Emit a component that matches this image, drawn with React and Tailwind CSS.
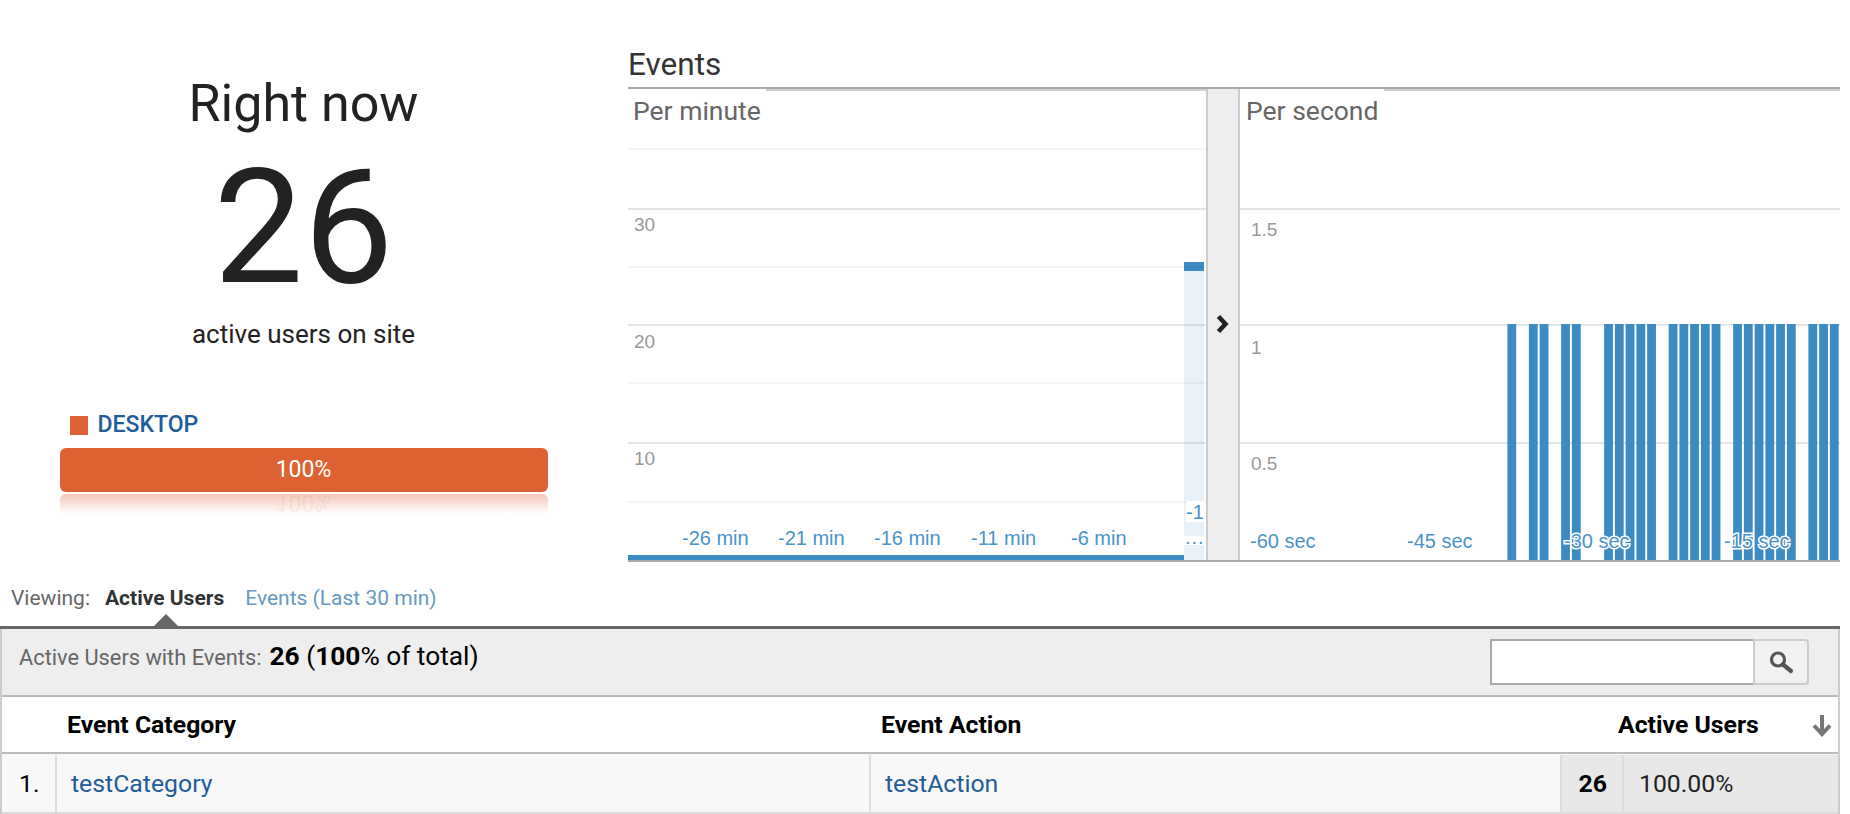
const MINUTE_GRID = [
  { y: 149, soft: true },
  { y: 209 },
  { y: 267, soft: true },
  { y: 325 },
  { y: 383, soft: true },
  { y: 443 },
  { y: 502, soft: true },
];
const MINUTE_TICKS = [
  ['-26 min', 682],
  ['-21 min', 778],
  ['-16 min', 874],
  ['-11 min', 971],
  ['-6 min', 1071],
];
const SECOND_TICKS = [
  ['-60 sec', 1250],
  ['-45 sec', 1407],
  ['-30 sec', 1564],
  ['-15 sec', 1724],
];
// slots counted back from the newest bar
const SECOND_SLOTS = [0, 1, 2, 4, 5, 6, 7, 8, 9, 11, 12, 13, 14, 15, 17, 18, 19, 20, 21, 24, 25, 27, 28, 30];

const axisFont = { fontFamily: '"Liberation Sans", Arial, sans-serif' };

const MinuteChart = () => (
  <svg viewBox="628 90 578 471" className="block w-[578px] h-[471px]" style={axisFont}>
    <rect x="766" y="90" width="440" height="2" fill="#cfcfcf" />
    <rect x="1184" y="263" width="20" height="298" fill="#e9f1f8" />
    <rect x="1184" y="263" width="20" height="9" fill="#3c8bc3" />
    {MINUTE_GRID.map((g) => (
      <rect key={g.y} x="628" y={g.y} width="578" height="2" fill="#000" fillOpacity={g.soft ? 0.04 : 0.1} />
    ))}
    <rect x="628" y="556" width="556" height="5" fill="#3c8bc3" />
    <text x="634" y="232" fontSize="19" fill="#999">30</text>
    <text x="634" y="349" fontSize="19" fill="#999">20</text>
    <text x="634" y="466" fontSize="19" fill="#999">10</text>
    {MINUTE_TICKS.map(([label, x]) => (
      <text key={label} x={x} y="546" fontSize="20" fill="#4a93c8">{label}</text>
    ))}
    <rect x="1186" y="502" width="18" height="21" fill="#fff" />
    <text x="1186" y="520" fontSize="20" fill="#4a93c8">-1</text>
    <rect x="1184" y="537" width="20" height="9" fill="#fff" />
    <text x="1185" y="545" fontSize="20" fill="#4a93c8" letterSpacing="1">...</text>
  </svg>
);

const SecondChart = () => (
  <svg viewBox="1240 90 600 471" className="block w-[600px] h-[471px]" style={axisFont}>
    <rect x="1384" y="90" width="456" height="2" fill="#cfcfcf" />
    <rect x="1240" y="209" width="600" height="2" fill="#e5e5e5" />
    <rect x="1240" y="325" width="600" height="2" fill="#e5e5e5" />
    <rect x="1240" y="443" width="600" height="2" fill="#e5e5e5" />
    {SECOND_SLOTS.map((k) => (
      <rect key={k} x={1829.9 - 10.75 * k} y="325" width="8.8" height="236" fill="#3c8bc3" />
    ))}
    <text x="1251" y="237" fontSize="19" fill="#999">1.5</text>
    <text x="1251" y="355" fontSize="19" fill="#999">1</text>
    <text x="1251" y="471" fontSize="19" fill="#999">0.5</text>
    {SECOND_TICKS.map(([label, x]) => (
      <text key={label} x={x} y="549" fontSize="20" fill="#4a93c8" stroke="#fff" strokeWidth="3" style={{ paintOrder: 'stroke' }}>
        {label}
      </text>
    ))}
  </svg>
);

const App = () => {
  return (
    <div className="w-full h-[814px] overflow-hidden bg-white font-['Roboto',sans-serif] text-[#222]">
      {/* Top half */}
      <div className="flex h-[586px]">
        {/* Right now */}
        <div className="w-[607px] flex flex-col items-center">
          <p className="mt-[70px] text-[52px] leading-[68px]">Right now</p>
          <p className="mt-[5px] text-[160px] leading-[170px]">26</p>
          <p className="mt-[5px] text-[26px] leading-[32px]">active users on site</p>

          <div className="mt-[63px] w-[488px]">
            <div className="flex items-center pl-[10px] h-[24px]">
              <span className="w-[18px] h-[19px] bg-[#dd6132]" />
              <span className="ml-[10px] text-[23px] font-medium text-[#1f5c99]">DESKTOP</span>
            </div>
            <div className="mt-[11px] h-[44px] rounded-md bg-[#dd6132] flex items-center justify-center text-white text-[23px]">
              100%
            </div>
            <div className="mt-[2px] h-[20px] rounded-t-md bg-linear-to-b from-[#dd6132]/35 to-white/0 overflow-hidden flex justify-center">
              <span className="mt-[17px] -scale-y-100 text-[23px] leading-none text-[#dd6132]/10">100%</span>
            </div>
          </div>
        </div>

        {/* Events */}
        <div className="ml-[21px] w-[1212px] flex flex-col">
          <h2 className="mt-[42px] text-[31.5px] leading-[45px] font-normal text-[#333]">Events</h2>
          <div className="flex border-t-2 border-b-2 border-[#a9a9a9] h-[475px]">
            <div className="relative w-[578px]">
              <span className="absolute left-[5px] top-[5px] text-[26.5px] leading-[34px] text-[#666]">Per minute</span>
              <MinuteChart />
            </div>
            <div className="w-[34px] border-x-2 border-[#ccc] bg-[#eee] flex justify-center pt-[225px]">
              <svg width="14" height="20" viewBox="0 0 14 20" className="-ml-[1px]">
                <path d="M2.5 2.5 L9.5 10 L2.5 17.5" fill="none" stroke="#222" strokeWidth="4.5" />
              </svg>
            </div>
            <div className="relative w-[600px]">
              <span className="absolute left-[6px] top-[5px] text-[26.5px] leading-[34px] text-[#666]">Per second</span>
              <SecondChart />
            </div>
          </div>
        </div>
      </div>

      {/* Viewing tabs */}
      <div className="relative flex items-center h-[40px] pl-[11px] pb-[14px] text-[21px]">
        <span className="text-[#666]">Viewing:</span>
        <span className="ml-[15px] font-bold text-[#333]">Active Users</span>
        <span className="ml-[21px] text-[#6699c4]">Events (Last 30 min)</span>
        <span className="absolute left-[154px] bottom-0 w-0 h-0 border-x-[12px] border-x-transparent border-b-[12px] border-b-[#666]" />
      </div>

      {/* Table */}
      <div className="w-[1840px] border-t-[3px] border-[#666]">
        <div className="border-x-2 border-[#ccc]">
          <div className="flex items-center justify-between h-[68px] bg-[#eee] border-b-2 border-[#bbb] pl-[17px] pr-[29px]">
            <div className="flex items-baseline -mt-[11px]">
              <span className="text-[21.8px] text-[#666]">Active Users with Events:</span>
              <span className="ml-[8px] text-[26.3px] text-black">
                <b>26</b> (<b>100</b>% of total)
              </span>
            </div>
            <div className="flex h-[46px]">
              <div className="w-[263px] bg-white border-2 border-r-0 border-[#a9a9a9]" />
              <div className="w-[56px] bg-[#f1f1f1] border-2 border-[#ccc] rounded-r-sm flex items-center justify-center">
                <svg width="26" height="24" viewBox="0 0 26 24">
                  <circle cx="10" cy="9.5" r="6.5" fill="none" stroke="#555" strokeWidth="3.2" />
                  <path d="M15 14.5 L23 21" stroke="#555" strokeWidth="4.2" strokeLinecap="round" />
                </svg>
              </div>
            </div>
          </div>

          <div className="flex items-center h-[57px] pt-[1px] border-b-2 border-[#bbb] text-[24.8px] font-bold text-black">
            <div className="w-[65px]" />
            <div className="w-[814px]">Event Category</div>
            <div className="w-[737px]">Event Action</div>
            <div className="w-[193px]">Active Users</div>
            <svg width="22" height="24" viewBox="0 0 22 24">
              <path d="M11 2 V20 M3 12.5 L11 21 L19 12.5" fill="none" stroke="#777" strokeWidth="4" />
            </svg>
          </div>

          <div className="flex h-[60px] pt-[1px] border-b-2 border-[#ddd] bg-[#f8f8f8] text-[24.8px]">
            <div className="w-[55px] border-r-2 border-[#ddd] flex items-center pl-[17px] text-black">1.</div>
            <div className="w-[814px] border-r-2 border-[#ddd] flex items-center pl-[14px] text-[#1f5c99]">testCategory</div>
            <div className="w-[691px] border-r-2 border-[#ddd] flex items-center pl-[14px] text-[#1f5c99]">testAction</div>
            <div className="w-[62px] border-r-2 border-[#ddd] bg-[#e8e8e8] flex items-center justify-end pr-[15px] font-bold text-black">26</div>
            <div className="flex-1 bg-[#e8e8e8] flex items-center pl-[15px] text-[#222]">100.00%</div>
          </div>
        </div>
      </div>
    </div>
  );
};

export default App;
